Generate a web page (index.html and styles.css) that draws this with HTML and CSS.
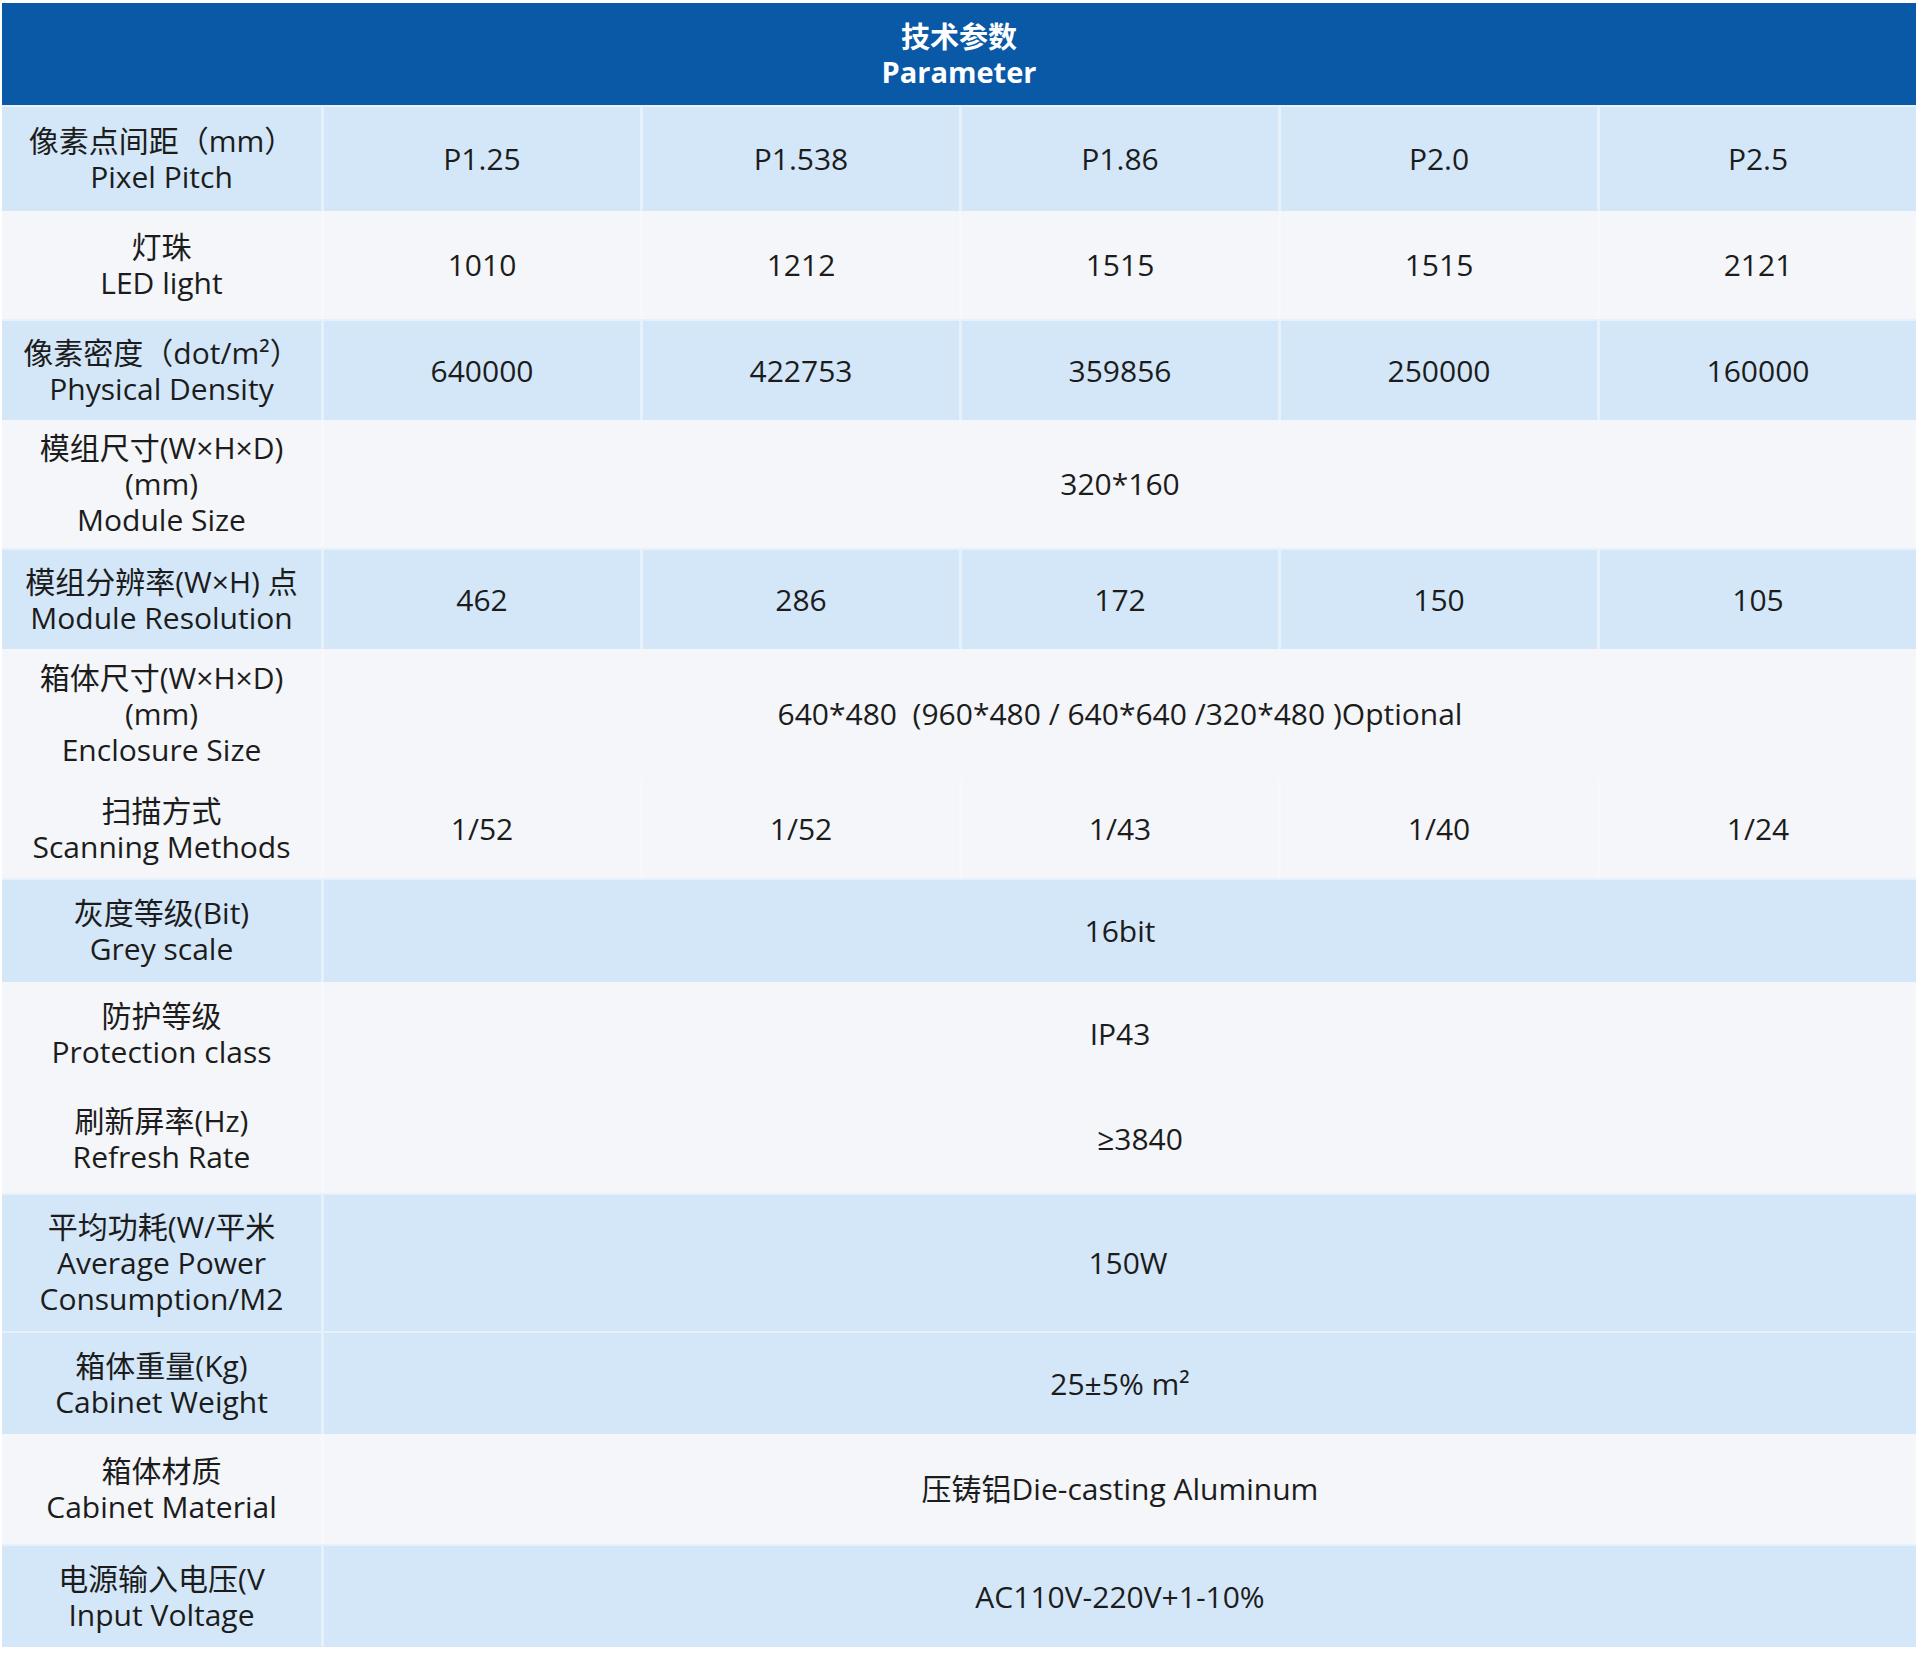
FILE: index.html
```html
<!DOCTYPE html>
<html lang="zh-CN">
<head>
<meta charset="utf-8">
<title>技术参数 Parameter</title>
<link rel="stylesheet" href="styles.css">
</head>
<body>
<table class="spec">
  <colgroup>
    <col class="c-label"><col><col><col><col><col>
  </colgroup>
  <thead>
    <tr>
      <th colspan="6" class="title">技术参数<br>Parameter</th>
    </tr>
  </thead>
  <tbody>
    <tr class="blue first">
      <td class="label">像素点间距（mm）<br>Pixel Pitch</td>
      <td>P1.25</td><td>P1.538</td><td>P1.86</td><td>P2.0</td><td>P2.5</td>
    </tr>
    <tr class="white tall">
      <td class="label">灯珠<br>LED light</td>
      <td>1010</td><td>1212</td><td>1515</td><td>1515</td><td>2121</td>
    </tr>
    <tr class="blue short">
      <td class="label">像素密度（dot/m²）<br>Physical Density</td>
      <td>640000</td><td>422753</td><td>359856</td><td>250000</td><td>160000</td>
    </tr>
    <tr class="white tri-a">
      <td class="label">模组尺寸(W×H×D)<br>(mm)<br>Module Size</td>
      <td colspan="5">320*160</td>
    </tr>
    <tr class="blue short">
      <td class="label">模组分辨率(W×H) 点<br>Module Resolution</td>
      <td>462</td><td>286</td><td>172</td><td>150</td><td>105</td>
    </tr>
    <tr class="white tri-b">
      <td class="label">箱体尺寸(W×H×D)<br>(mm)<br>Enclosure Size</td>
      <td colspan="5">640*480&nbsp;&nbsp;(960*480 / 640*640 /320*480 )Optional</td>
    </tr>
    <tr class="white shorter">
      <td class="label">扫描方式<br>Scanning Methods</td>
      <td>1/52</td><td>1/52</td><td>1/43</td><td>1/40</td><td>1/24</td>
    </tr>
    <tr class="blue grey">
      <td class="label">灰度等级(Bit)<br>Grey scale</td>
      <td colspan="5">16bit</td>
    </tr>
    <tr class="white">
      <td class="label">防护等级<br>Protection class</td>
      <td colspan="5">IP43</td>
    </tr>
    <tr class="white mid">
      <td class="label">刷新屏率(Hz)<br>Refresh Rate</td>
      <td colspan="5" class="shift-lg">≥3840</td>
    </tr>
    <tr class="blue xl">
      <td class="label">平均功耗(W/平米<br>Average Power<br>Consumption/M2</td>
      <td colspan="5" class="shift-sm">150W</td>
    </tr>
    <tr class="blue">
      <td class="label">箱体重量(Kg)<br>Cabinet Weight</td>
      <td colspan="5">25±5% m²</td>
    </tr>
    <tr class="white taller">
      <td class="label">箱体材质<br>Cabinet Material</td>
      <td colspan="5">压铸铝Die-casting Aluminum</td>
    </tr>
    <tr class="blue">
      <td class="label">电源输入电压(V<br>Input Voltage</td>
      <td colspan="5">AC110V-220V+1-10%</td>
    </tr>
  </tbody>
</table>
</body>
</html>
```
FILE: styles.css
```css
html, body {
  margin: 0;
  padding: 0;
  background: #ffffff;
}

body {
  padding: 3px 4px 0 2px;
  font-family: "Open Sans", "Noto Sans CJK SC", sans-serif;
  color: #1c1c1c;
}

.spec {
  width: 1914px;
  table-layout: fixed;
  border-collapse: separate;
  border-spacing: 0;
  font-size: 30px;
  line-height: 36px;
}

.spec th,
.spec td {
  box-sizing: border-box;
  text-align: center;
  vertical-align: middle;
  padding: 10px 4px;
  font-weight: 400;
}

.spec td {
  height: 103px;
}

.title {
  height: 102px;
  background: #0a59a7;
  color: #ffffff;
  font-weight: 700 !important;
  font-size: 29px;
  line-height: 35px;
  padding: 6px 0 12px;
}

.blue td {
  background: #d3e7f8;
  border-top: 2px solid #e6f1fb;
}

.blue td + td {
  border-left: 3px solid #e6f1fb;
}

.white td {
  background: #f4f6f9;
}

.white td + td {
  border-left: 3px solid #f6f8fb;
}

.first td {
  height: 106px;
}

.tall td {
  height: 108px;
}

.taller td {
  height: 110px;
}

.short td {
  height: 101px;
}

.shorter td {
  height: 99px;
}

.grey td {
  height: 104px;
}

.mid td {
  height: 108px;
}

.tri-a td {
  height: 128px;
}

.tri-b td {
  height: 130px;
}

.xl td {
  height: 138px;
}

.shift-lg {
  padding-left: 44px !important;
}

.shift-sm {
  padding-left: 20px !important;
}
```
